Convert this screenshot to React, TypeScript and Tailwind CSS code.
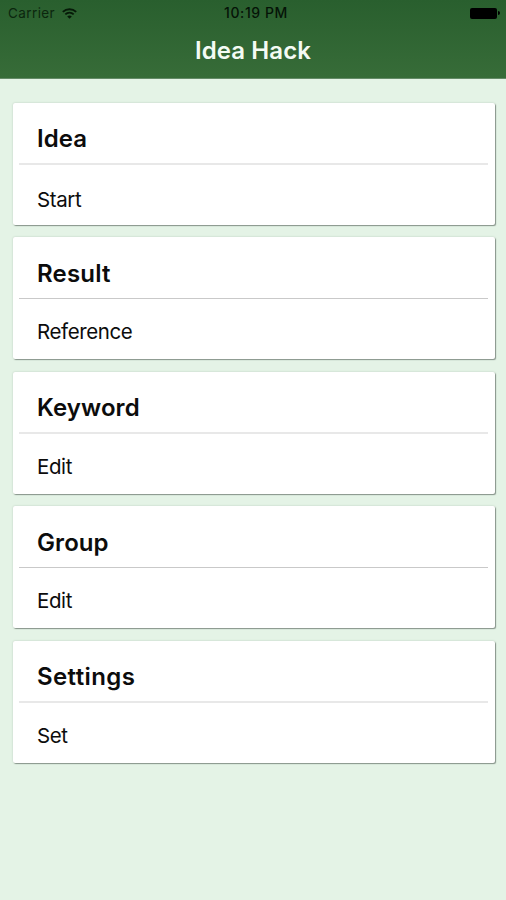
type Section = { title: string; action: string; rule: string; spacing: string };

// Rules alternate between a crisp hairline and a softer two pixel line.
const SOFT = "h-[2px] bg-[#e8e8e8]";
const CRISP = "mt-px h-px bg-[#c9c9c9]";

const sections: Section[] = [
  { title: "Idea", action: "Start", rule: SOFT, spacing: "tracking-[0.1px]" },
  { title: "Result", action: "Reference", rule: CRISP, spacing: "tracking-[0.2px]" },
  { title: "Keyword", action: "Edit", rule: SOFT, spacing: "tracking-[0.08px]" },
  { title: "Group", action: "Edit", rule: CRISP, spacing: "tracking-[0.08px]" },
  { title: "Settings", action: "Set", rule: SOFT, spacing: "tracking-[0.4px]" },
];

export default function App() {
  return (
    <div className="flex h-[900px] w-[506px] flex-col overflow-hidden bg-[#e4f3e6] font-[Inter,sans-serif] text-[#0c0c0c]">
      <header className="h-[79px] shrink-0 border-b border-[#648a67] bg-linear-to-b from-[#295f2e] to-[#376c38]">
        <StatusBar />
        <h1 className="text-center text-[24px] leading-[30px] font-semibold tracking-[0.08px] text-[#f4fbf4]">
          Idea Hack
        </h1>
      </header>
      <main className="flex flex-col gap-[12.5px] pt-[23.5px] pr-[11px] pl-[13px]">
        {sections.map((s, i) => (
          <Card key={s.title} section={s} first={i === 0} />
        ))}
      </main>
    </div>
  );
}

function StatusBar() {
  return (
    <div className="flex h-[36px] items-start justify-between pt-[5px] pr-[6px] pl-2 text-[13.5px] leading-[17px]">
      <div className="flex w-[182px] items-center gap-[7px]">
        <span className="tracking-[0.4px] text-[#0b260e]">Carrier</span>
        <WifiIcon />
      </div>
      <span className="text-[14px] leading-[16px] font-medium tracking-[0.6px] whitespace-nowrap text-[#051307]">
        10:19 PM
      </span>
      <div className="flex h-[16px] w-[178px] items-center justify-end gap-px">
        <span className="h-[11px] w-[27px] rounded-[2px] bg-black" />
        <span className="h-[4px] w-[2px] rounded-r-full bg-black" />
      </div>
    </div>
  );
}

function WifiIcon() {
  return (
    <svg width="15" height="11" viewBox="0 0 15 11" fill="none" stroke="#061a08" strokeWidth="1.9">
      <path d="M0.8 3.9C4.6 0.3 10.4 0.3 14.2 3.9" />
      <path d="M3.3 6.4C5.7 4.2 9.3 4.2 11.7 6.4" />
      <path d="M7.5 10.8L5.2 8.4C6.5 7.2 8.5 7.2 9.8 8.4Z" fill="#061a08" stroke="none" />
    </svg>
  );
}

function Card({ section, first }: { section: Section; first: boolean }) {
  return (
    <section className="flex h-[122px] flex-col rounded-[2px] bg-white shadow-[1px_1px_1px_rgba(70,80,72,0.55),0_0_2px_rgba(60,85,65,0.25)]">
      <h2 className={`h-[60px] pt-[21.5px] pl-6 text-[24px] leading-[30px] font-semibold ${section.spacing}`}>
        {section.title}
      </h2>
      <div className={`mr-[7px] ml-[5.5px] ${section.rule}`} />
      <p className={`pl-6 text-[20.5px] leading-[26px] tracking-[-0.4px] ${first ? "pt-[22px]" : "pt-[20px]"}`}>
        {section.action}
      </p>
    </section>
  );
}
